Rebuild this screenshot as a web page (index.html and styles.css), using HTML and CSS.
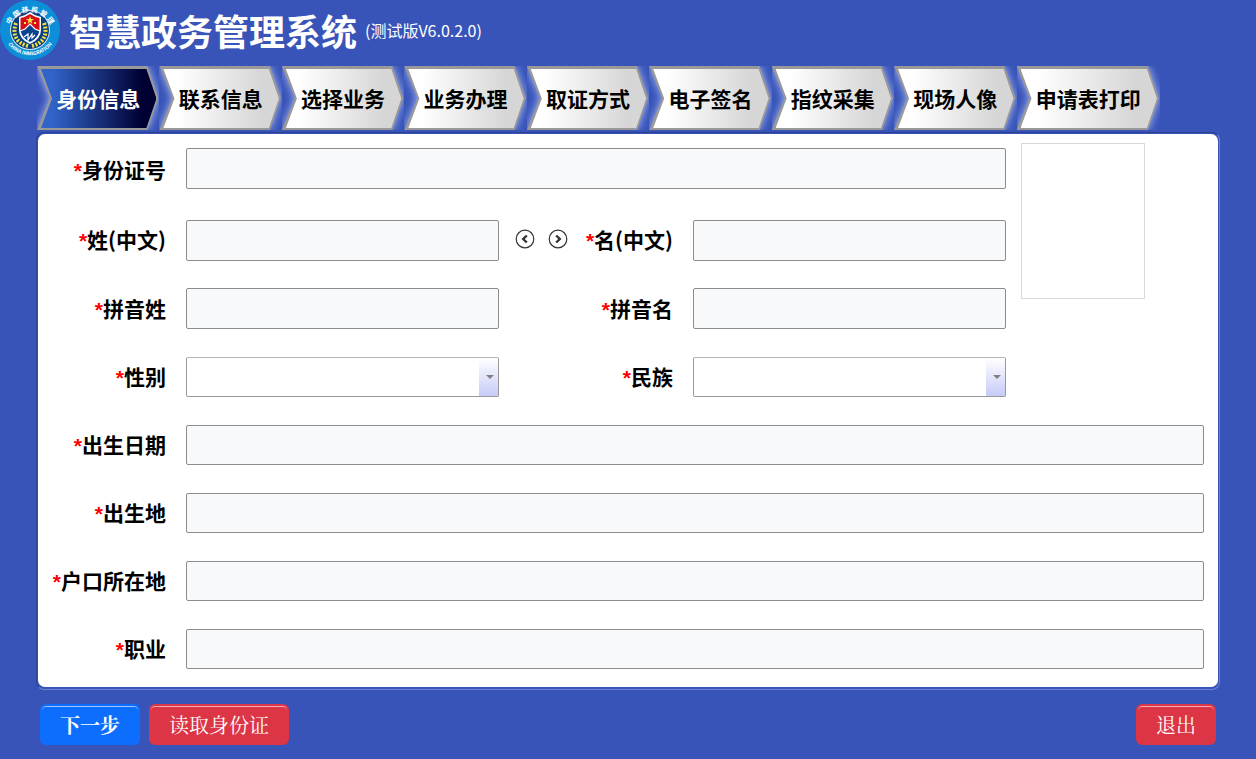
FILE: index.html
```html
<!DOCTYPE html>
<html lang="zh-CN">
<head>
<meta charset="utf-8">
<meta name="viewport" content="width=device-width, initial-scale=1">
<title>智慧政务管理系统</title>
<link rel="stylesheet" href="styles.css">
</head>
<body>
<header class="header">
  <svg class="logo" viewBox="0 0 60 60" aria-hidden="true">
    <defs>
      <path id="arc-top" d="M8 34A22 22 0 1 1 52 34"/>
      <path id="arc-bottom" d="M3 33A27.500 27.500 0 0 0 57 33"/>
    </defs>
    <circle cx="30" cy="30" r="30" fill="#0b8fd8"/>
    <circle cx="30" cy="30" r="20" fill="#d6e6ea"/>
    <circle cx="30" cy="30" r="19" fill="#063f86"/>
    <path d="M16 23C12 34 16 43 28 46M44 23C48 34 44 43 32 46" fill="none" stroke="#f5df3c" stroke-width="4" stroke-dasharray="2 1.500"/>
    <path d="M19 17q6-1 11-5 5 4 11 5v13q0 9-11 14-11-5-11-14z" fill="#fff"/>
    <path d="M20.500 18q5-1 9.500-4 4.500 3 9.500 4v12h-19z" fill="#d80e17"/>
    <path d="M20.500 30h3l6.500-5 6.500 5h3q-1 8-9.500 12-8.500-4-9.500-12z" fill="#0a438d"/>
    <path d="M20 31l5-2 5-5 5 5 5 2M24 37l4-3v6l4-6v4l3-3" fill="none" stroke="#fff" stroke-width="1.200"/>
    <path d="M30 16l1 3h3l-2.500 2 1 3-2.500-2-2.500 2 1-3-2.500-2h3zM24 22h2v2h-2zM34 22h2v2h-2z" fill="#ffe14a"/>
    <text class="seal-cn"><textPath href="#arc-top" startOffset="50%">中 国 移 民 管 理</textPath></text>
    <text class="seal-en"><textPath href="#arc-bottom" startOffset="50%">CHINA IMMIGRATION</textPath></text>
  </svg>
  <h1 class="title">智慧政务管理系统</h1>
  <span class="version">(测试版V6.0.2.0)</span>
</header>

<nav class="steps" aria-label="办理步骤">
  <button class="step step-active" type="button" aria-current="step"><span class="arrow"></span>身份信息</button>
  <button class="step" type="button"><span class="arrow"></span>联系信息</button>
  <button class="step" type="button"><span class="arrow"></span>选择业务</button>
  <button class="step" type="button"><span class="arrow"></span>业务办理</button>
  <button class="step" type="button"><span class="arrow"></span>取证方式</button>
  <button class="step" type="button"><span class="arrow"></span>电子签名</button>
  <button class="step" type="button"><span class="arrow"></span>指纹采集</button>
  <button class="step" type="button"><span class="arrow"></span>现场人像</button>
  <button class="step" type="button"><span class="arrow"></span>申请表打印</button>
</nav>

<main class="frame">
  <form class="panel" id="identity">
    <label class="label" for="id-no"><span class="star">*</span>身份证号</label>
    <input class="field span-3 tall" id="id-no" type="text" readonly>
    <div class="photo"></div>

    <label class="label" for="surname"><span class="star">*</span>姓(中文)</label>
    <input class="field tall" id="surname" type="text" readonly>
    <div class="shift">
      <button class="round" type="button" aria-label="左移"><svg viewBox="0 0 20 20"><circle cx="10" cy="10" r="8.800"/><path d="M11.800 6.500 8.200 10l3.600 3.500"/></svg></button>
      <button class="round" type="button" aria-label="右移"><svg viewBox="0 0 20 20"><circle cx="10" cy="10" r="8.800"/><path d="M8.200 6.500 11.800 10l-3.600 3.500"/></svg></button>
      <label class="label" for="given"><span class="star">*</span>名(中文)</label>
    </div>
    <input class="field tall" id="given" type="text" readonly>

    <label class="label" for="py-surname"><span class="star">*</span>拼音姓</label>
    <input class="field tall" id="py-surname" type="text" readonly>
    <label class="label" for="py-given"><span class="star">*</span>拼音名</label>
    <input class="field tall" id="py-given" type="text" readonly>

    <label class="label row-start" for="sex"><span class="star">*</span>性别</label>
    <div class="picker"><select class="select" id="sex"><option></option></select></div>
    <label class="label" for="nation"><span class="star">*</span>民族</label>
    <div class="picker"><select class="select" id="nation"><option></option></select></div>

    <label class="label row-start" for="birthday"><span class="star">*</span>出生日期</label>
    <input class="field span-4" id="birthday" type="text" readonly>
    <label class="label" for="birthplace"><span class="star">*</span>出生地</label>
    <input class="field span-4" id="birthplace" type="text" readonly>
    <label class="label" for="residence"><span class="star">*</span>户口所在地</label>
    <input class="field span-4" id="residence" type="text" readonly>
    <label class="label" for="job"><span class="star">*</span>职业</label>
    <input class="field span-4" id="job" type="text" readonly>
  </form>
</main>

<footer class="actions">
  <button class="btn btn-primary" type="button">下一步</button>
  <button class="btn" type="button">读取身份证</button>
  <button class="btn btn-exit" type="button">退出</button>
</footer>
</body>
</html>
```
FILE: styles.css
```css
* { box-sizing: border-box; }

body {
  margin: 0;
  min-height: 100vh;
  background: #3854b8;
  color: #000;
  font-family: "Microsoft YaHei", "Noto Sans CJK SC", sans-serif;
}

button { font-family: inherit; cursor: pointer; }

/* Header */
.header {
  display: flex;
  align-items: center;
  height: 66px;
  padding-bottom: 6px;
  color: #fff;
}
.logo { width: 60px; height: 60px; flex: none; }
.seal-cn, .seal-en { fill: #fff; text-anchor: middle; font-weight: 700; }
.seal-cn { font-size: 7px; }
.seal-en { font-size: 5px; }
.title { margin: 0 8px 0 9px; font-size: 36px; line-height: 48px; font-weight: 700; }
.version { font-size: 16px; line-height: 20px; }

/* Arrow-shaped steps */
.steps { display: flex; margin: 0 96px 0 37px; }
.step {
  position: relative;
  z-index: 0;
  flex: 1 1 auto;
  height: 64px;
  padding: 0 19px;
  border: 0;
  background: none;
  color: #000;
  font-size: 21px;
  font-weight: 700;
  line-height: 32px;
  white-space: nowrap;
  overflow: hidden;
}
.arrow {
  position: absolute;
  z-index: -1;
  inset: 0;
  filter: drop-shadow(0 0 4px #a9b8f4);
}
.arrow::before, .arrow::after { content: ""; position: absolute; }
.arrow::before {
  inset: 0 1px 0 0;
  background: #999;
  clip-path: polygon(0 0, calc(100% - 11px) 0, 100% 50%, calc(100% - 11px) 100%, 0 100%, 13px 50%);
}
.arrow::after {
  inset: 3px 3px 2px 4px;
  background: linear-gradient(90deg, #fff 12%, #d6d6d6 85%);
  clip-path: polygon(0 0, calc(100% - 10px) 0, 100% 50%, calc(100% - 10px) 100%, 0 100%, 11px 50%);
}
.step-active { color: #fff; }
.step-active .arrow::after { background: linear-gradient(90deg, #3163c8 10%, #000033 88%); }

/* Form panel */
.frame {
  margin: 2px 36px 0;
  padding: 1px 1px 2px;
  border: 1px solid;
  border-color: #2b4190 #6d83d2 #6d83d2 #2b4190;
  border-radius: 8px;
}
.panel {
  display: grid;
  grid-template-columns: 148px 1fr 194px 1fr 198px;
  grid-template-rows: 44px 40px 41px;
  grid-auto-rows: 40px;
  row-gap: 28px;
  padding: 14px 14px 18px 0;
  border-radius: 7px;
  background: #fff;
}
.label {
  align-self: center;
  padding-right: 20px;
  font-size: 21px;
  font-weight: 700;
  line-height: 32px;
  text-align: right;
  white-space: nowrap;
}
.star { color: #f00; font-family: "Liberation Sans", sans-serif; }
.row-start { grid-column-start: 1; }
.field {
  width: 100%;
  height: 40px;
  padding: 0 12px;
  border: 1px solid #8c8c8c;
  border-radius: 2px;
  background: #f8f9fb;
  font: 20px "Noto Sans CJK SC", sans-serif;
}
.tall { height: 41px; }
.span-3 { grid-column: span 3; }
.span-4 { grid-column: span 4; }
.photo {
  grid-column: 5;
  grid-row: 1 / span 3;
  width: 124px;
  height: 156px;
  margin: -5px 0 0 15px;
  border: 1px solid #d9d9d9;
}
.shift { display: flex; align-items: center; padding-left: 16px; }
.shift .label { margin-left: auto; }
.round {
  width: 20px;
  height: 20px;
  margin: 0 13px 2px 0;
  padding: 0;
  border: 0;
  background: none;
}
.round svg { display: block; fill: none; stroke: #333; stroke-width: 1.2; }
.round path { stroke-width: 2.4; }
.picker { position: relative; }
.select {
  width: 100%;
  height: 40px;
  appearance: none;
  border: 1px solid #999;
  border-top-color: #b5b5b5;
  border-radius: 2px;
  background: linear-gradient(#fff, #c6cbf8) right / 19px 100% no-repeat #fff;
}
.picker::after {
  content: "";
  position: absolute;
  top: 18px;
  right: 5px;
  border: 4px solid transparent;
  border-top-color: #808080;
  border-bottom: 0;
  pointer-events: none;
}

/* Bottom buttons */
.actions { display: flex; gap: 9px; padding: 14px 40px; }
.btn {
  height: 41px;
  padding: 0 18px;
  border: 2px solid #dc3545;
  border-radius: 6px;
  background: #dc3545;
  box-shadow: inset 0 1px 0 rgba(255, 255, 255, .6);
  color: #fff;
  font-family: "SimSun", "Noto Serif CJK SC", "Noto Sans CJK SC", serif;
  font-size: 20px;
  font-weight: 400;
  line-height: 28px;
}
.btn-primary { border-color: #0d6efd; background: #0d6efd; font-weight: 700; }
.btn-exit { margin-left: auto; }
```
